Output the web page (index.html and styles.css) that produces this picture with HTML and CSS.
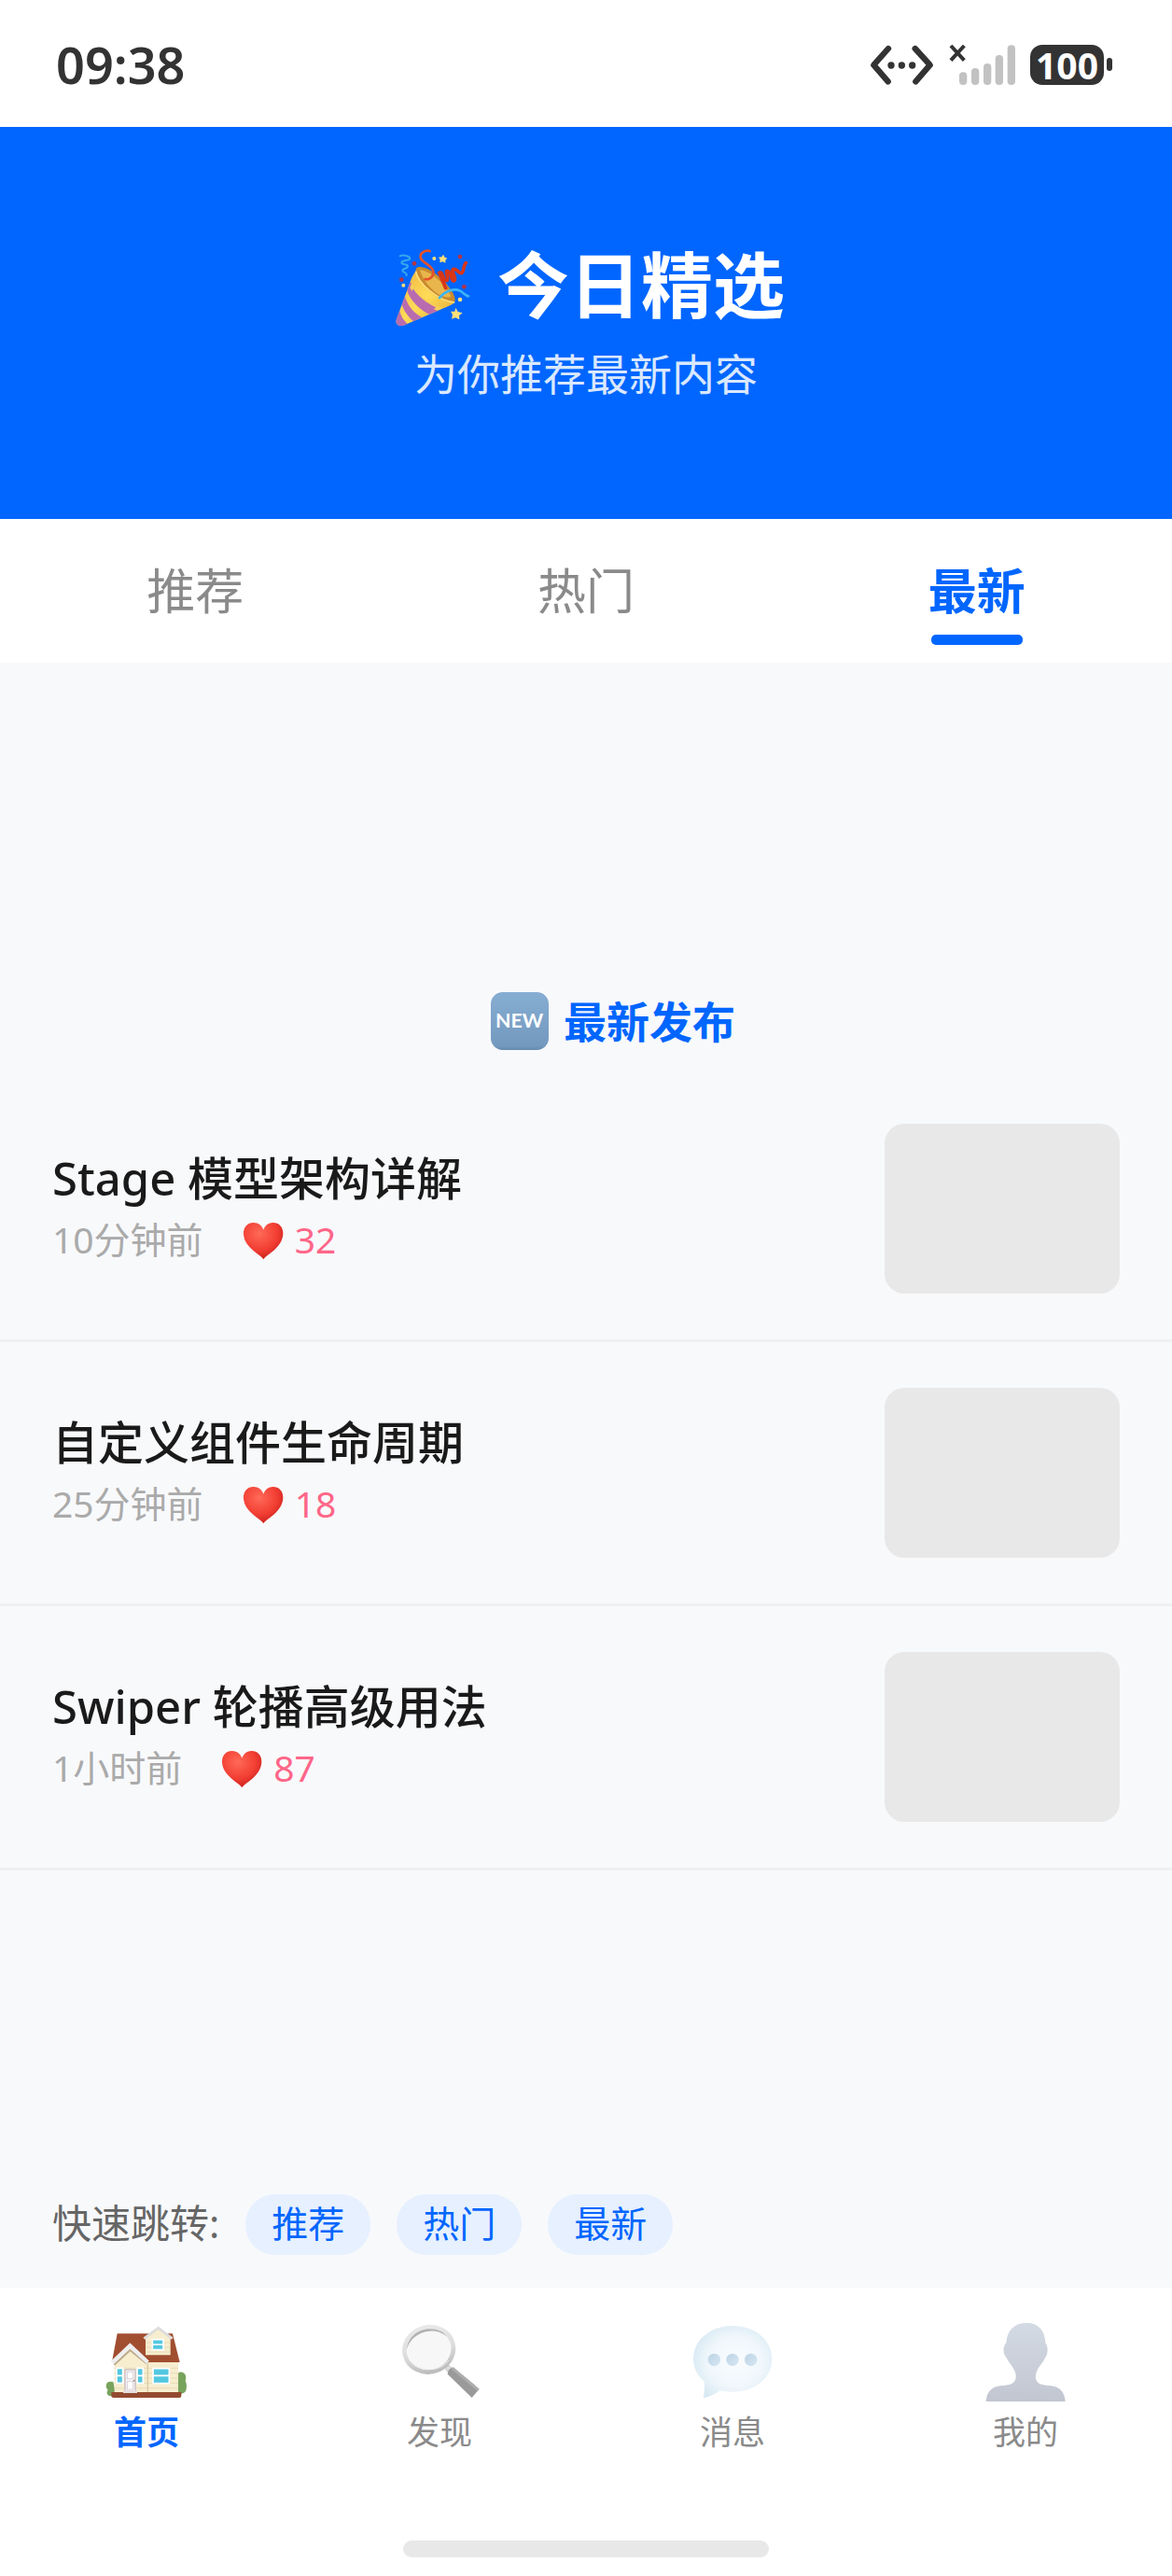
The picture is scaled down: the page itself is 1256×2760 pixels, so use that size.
FILE: index.html
```html
<!DOCTYPE html>
<html lang="zh-CN">
<head>
    <meta charset="UTF-8">
    <meta name="viewport" content="width=device-width, initial-scale=1.0">
    <title>今日精选</title>
    <link rel="stylesheet" href="styles.css">
</head>
<body>

    <div class="status-bar">
        <span class="time">09:38</span>
        <div class="status-icons">
            <svg width="70" height="45" viewBox="96 84 210 135" fill="none" stroke="#333" stroke-width="19" stroke-linecap="round" stroke-linejoin="round">
                <path d="M156 99L109 152L155 205M242 99L290 152L244 205"/>
                <g fill="#333" stroke="none">
                    <circle cx="165" cy="153" r="11"/>
                    <circle cx="199" cy="153" r="11"/>
                    <circle cx="233" cy="153" r="11"/>
                </g>
            </svg>
            <svg width="72" height="45" viewBox="348 84 216 135">
                <path d="M354 90L397 137M397 90L354 137" stroke="#333" stroke-width="12"/>
                <g fill="#c2c2c2">
                    <rect x="381" y="175" width="25" height="41" rx="12"/>
                    <rect x="420" y="162" width="25" height="54" rx="12"/>
                    <rect x="459" y="147" width="25" height="69" rx="12"/>
                    <rect x="497" y="120" width="25" height="96" rx="12"/>
                    <rect x="536" y="88" width="25" height="128" rx="12"/>
                </g>
            </svg>
            <div class="battery"><span>100</span></div>
        </div>
    </div>

    <header class="banner">
        <h1>
            <svg width="96" height="96" viewBox="45 54 288 288">
                <defs>
                    <linearGradient id="cone" x1="0" y1="0" x2="1" y2="1">
                        <stop offset="0" stop-color="#e9a93c"/>
                        <stop offset=".5" stop-color="#ffdc58"/>
                        <stop offset="1" stop-color="#d99a2e"/>
                    </linearGradient>
                    <clipPath id="cone-shape">
                        <path d="M137 150C139 190 205 250 262 252C252 262 215 275 195 284L97 326C83 332 70 322 74 308L124 172Z"/>
                    </clipPath>
                </defs>
                <path d="M137 152C132 128 175 134 215 172C252 206 270 240 261 251C250 265 205 245 170 212C148 190 137 168 137 152Z" fill="#c98a2d"/>
                <path d="M150 148C180 148 235 195 250 233C220 246 165 200 150 148Z" fill="#e8b64c"/>
                <g clip-path="url(#cone-shape)">
                    <path d="M60 140H270V340H60Z" fill="url(#cone)"/>
                    <path d="M118 180C130 220 170 262 220 282L192 296C150 278 118 245 108 212ZM100 226C108 260 130 288 160 302L136 318C112 300 96 276 90 252ZM84 276C88 295 98 312 116 326L90 336L66 310Z" fill="#b96bb0"/>
                    <path d="M124 190C140 226 178 256 224 270L206 278C160 262 130 232 118 204Z" fill="#f7cf55"/>
                    <path d="M128 208C146 234 170 254 202 268L186 280C158 268 134 246 120 224Z" fill="#b96bb0"/>
                </g>
                <path d="M137 152C142 190 210 249 262 252" fill="none" stroke="#ffe07a" stroke-width="5"/>
                <g fill="none" stroke-linecap="round">
                    <path d="M182 87C165 83 148 94 153 110C159 126 190 133 193 153C195 169 181 181 167 177" stroke="#e5512a" stroke-width="8"/>
                    <path d="M233 206L212 157C223 147 224 184 236 182C247 178 227 148 239 151C252 153 250 188 261 182C270 174 246 149 259 145C272 143 274 163 285 157C294 151 286 137 298 125" stroke="#d93618" stroke-width="11"/>
                    <path d="M213 237C234 214 260 206 279 215C290 220 295 230 306 232" stroke="#3fb4f5" stroke-width="8"/>
                    <path d="M86 103C100 97 119 105 118 112C116 119 91 115 91 124C91 133 112 126 111 136C110 145 94 142 94 150C95 158 109 153 107 165" stroke="#36a7ee" stroke-width="6"/>
                </g>
                <g fill="#b83242">
                    <circle cx="132" cy="127" r="7"/>
                    <circle cx="91" cy="179" r="7"/>
                    <circle cx="279" cy="105" r="7"/>
                    <circle cx="292" cy="202" r="7"/>
                </g>
                <g fill="#ffdf7a">
                    <circle cx="97" cy="197" r="6"/>
                    <circle cx="196" cy="111" r="6"/>
                    <circle cx="279" cy="243" r="7"/>
                    <path d="M225 98L230 107L238 110L232 116L232 125L223 121L214 124L215 114L210 107L220 106Z"/>
                    <path d="M265 269L272 282L287 286L276 294L277 307L264 301L252 305L255 291L249 281L262 281Z"/>
                </g>
            </svg>
            今日精选
        </h1>
        <p>为你推荐最新内容</p>
    </header>

    <nav class="tabs">
        <button type="button">推荐</button>
        <button type="button">热门</button>
        <button type="button" class="active">最新</button>
    </nav>

    <main class="content">
        <h2>
            <svg width="62" height="62" viewBox="84 99 186 186">
                <defs>
                    <linearGradient id="new-bg" x1="0" y1="0" x2="0" y2="1">
                        <stop offset="0" stop-color="#86add2"/>
                        <stop offset=".93" stop-color="#7499bf"/>
                        <stop offset="1" stop-color="#6488ae"/>
                    </linearGradient>
                </defs>
                <rect x="84" y="99" width="186" height="186" rx="38" fill="url(#new-bg)"/>
                <text class="new-text" x="176" y="213" text-anchor="middle">NEW</text>
            </svg>
            最新发布
        </h2>

        <svg class="defs" width="0" height="0">
            <defs>
                <radialGradient id="heart-bg" cx=".4" cy=".3" r=".75">
                    <stop offset="0" stop-color="#ff6a58"/>
                    <stop offset=".6" stop-color="#f23e33"/>
                    <stop offset="1" stop-color="#c51d1a"/>
                </radialGradient>
                <symbol id="heart" viewBox="690 354 132 132">
                    <path d="M757 484C750 474 734 465 719 451C702 435 693 419 693 400C693 380 706 366 725 366C741 366 752 375 757 389C762 375 773 366 788 366C807 366 820 380 820 400C820 419 811 435 795 451C780 465 764 474 757 484Z" fill="url(#heart-bg)"/>
                </symbol>
            </defs>
        </svg>

        <ul class="news-list">
            <li class="news-item">
                <div class="news-text">
                    <h3>Stage 模型架构详解</h3>
                    <p><span>10分钟前</span><span class="like"><svg width="44" height="44"><use href="#heart"/></svg>32</span></p>
                </div>
                <div class="thumb"></div>
            </li>
            <li class="news-item">
                <div class="news-text">
                    <h3>自定义组件生命周期</h3>
                    <p><span>25分钟前</span><span class="like"><svg width="44" height="44"><use href="#heart"/></svg>18</span></p>
                </div>
                <div class="thumb"></div>
            </li>
            <li class="news-item">
                <div class="news-text">
                    <h3>Swiper 轮播高级用法</h3>
                    <p><span>1小时前</span><span class="like"><svg width="44" height="44"><use href="#heart"/></svg>87</span></p>
                </div>
                <div class="thumb"></div>
            </li>
        </ul>
    </main>

    <div class="quick-jump">
        <span>快速跳转:</span>
        <button type="button">推荐</button>
        <button type="button">热门</button>
        <button type="button">最新</button>
    </div>

    <footer class="bottom-bar">
        <nav class="bottom-nav">
            <a href="#" class="active">
                <svg width="90" height="90" viewBox="66 75 270 270">
                    <path d="M72 285C72 276 82 273 94 276L104 322H84C71 318 73 306 77 302C71 296 70 290 72 285ZM298 262C298 245 312 240 322 248C330 255 328 266 326 272C332 284 330 300 327 306C320 315 308 316 298 314Z" fill="#78a35c"/>
                    <path d="M88 309H313V321Q313 327 306 327H95Q88 327 88 321Z" fill="#934b30"/>
                    <path d="M98 200L148 165L200 212H303V309H98Z" fill="#f7edcf"/>
                    <path d="M98 232H303M98 248H303M98 264H303M98 280H303M98 296H303" stroke="#e3d5ae" stroke-width="2"/>
                    <path d="M205 212V309" stroke="#d9cba6" stroke-width="4"/>
                    <path d="M107 121H285L308 213H205L148 158L91 206Z" fill="#a14e30"/>
                    <path d="M198 136L239 106L278 136V190H198Z" fill="#f7edcf"/>
                    <path d="M198 150H278M198 165H278M198 180H278" stroke="#e3d5ae" stroke-width="2"/>
                    <path d="M193 137L239 103L284 137" fill="none" stroke="#dedddd" stroke-width="9"/>
                    <path d="M97 221L148 174L201 217" fill="none" stroke="#bda98c" stroke-width="6"/>
                    <path d="M91 214L148 160L205 213" fill="none" stroke="#eee" stroke-width="13"/>
                    <g fill="#52c7e0" stroke="#fff" stroke-width="5">
                        <path d="M220 140H255V173H220ZM220 156H255M105 232H125V280H105ZM105 256H125M171 232H190V280H171ZM171 256H190M222 233H274V281H222ZM222 256H274"/>
                    </g>
                    <rect x="132" y="237" width="33" height="71" fill="#f3eff2" stroke="#c9bdc3" stroke-width="4"/>
                    <rect x="139" y="244" width="19" height="22" fill="#fff" stroke="#d0c7cc" stroke-width="2"/>
                    <rect x="139" y="275" width="19" height="25" fill="#fff" stroke="#d0c7cc" stroke-width="2"/>
                    <circle cx="161" cy="272" r="3" fill="#9a8a72"/>
                    <path d="M126 304H171V312H126Z" fill="#e5dddd"/>
                </svg>
                首页
            </a>
            <a href="#">
                <svg width="90" height="90" viewBox="78 75 270 270">
                    <defs>
                        <linearGradient id="ring" x1="0" y1="0" x2="0" y2="1">
                            <stop offset="0" stop-color="#e8e8e8"/>
                            <stop offset=".5" stop-color="#dedede"/>
                            <stop offset="1" stop-color="#bdbdbd"/>
                        </linearGradient>
                    </defs>
                    <path d="M232 229L243 223L258 236L247 248L235 240Z" fill="#ddd" stroke="#bbb" stroke-width="2"/>
                    <path d="M239 251Q240 234 257 229L341 299L317 327Z" fill="#9a9a9a"/>
                    <path d="M257 229L341 299L335 305L251 235Z" fill="#adadad"/>
                    <ellipse cx="179" cy="172" rx="79" ry="72" transform="rotate(-15 179 172)" fill="#f7f7f7" stroke="url(#ring)" stroke-width="14"/>
                    <path d="M108 170C112 132 144 106 182 106C207 106 226 115 237 131C219 116 202 112 181 113C147 115 118 137 108 170Z" fill="#b2b2b2"/>
                    <path d="M118 207C140 242 213 249 242 207" fill="none" stroke="#eee" stroke-width="3"/>
                </svg>
                发现
            </a>
            <a href="#">
                <svg width="90" height="90" viewBox="60 75 270 270">
                    <defs>
                        <radialGradient id="bubble" cx=".54" cy=".5" r=".58">
                            <stop offset="0" stop-color="#fafcfe"/>
                            <stop offset=".6" stop-color="#f0f7fc"/>
                            <stop offset="1" stop-color="#d8e9f3"/>
                        </radialGradient>
                        <linearGradient id="dot" x1="0" y1="0" x2="1" y2="1">
                            <stop offset="0" stop-color="#bdd4e5"/>
                            <stop offset="1" stop-color="#d5e6f3"/>
                        </linearGradient>
                    </defs>
                    <path d="M195 96C267 96 322 141 322 202C322 263 267 308 195 308C180 308 167 306 155 304C139 316 118 324 101 329C105 312 106 292 104 274C82 256 69 231 69 202C69 141 123 96 195 96Z" fill="url(#bubble)"/>
                    <g fill="url(#dot)">
                        <circle cx="136" cy="205" r="20"/>
                        <circle cx="195" cy="205" r="20"/>
                        <circle cx="254" cy="205" r="20"/>
                    </g>
                </svg>
                消息
            </a>
            <a href="#">
                <svg width="90" height="90" viewBox="72 75 270 270">
                    <defs>
                        <linearGradient id="person" x1="0" y1="0" x2="0" y2="1">
                            <stop offset="0" stop-color="#d3dae3"/>
                            <stop offset="1" stop-color="#c2c6d1"/>
                        </linearGradient>
                    </defs>
                    <path d="M210 86C249 86 270 112 271 151C280 161 280 183 272 196C264 214 246 230 241 249C237 266 242 279 258 284C278 289 303 286 318 300C330 311 334 324 335 339H80C81 324 85 311 97 300C112 286 137 289 158 284C173 279 179 266 175 249C170 230 153 214 144 196C134 183 134 161 145 151C147 112 170 86 210 86Z" fill="url(#person)"/>
                </svg>
                我的
            </a>
        </nav>
        <div class="home-indicator"></div>
    </footer>

</body>
</html>
```

FILE: styles.css
```css
* {
    box-sizing: border-box;
    margin: 0;
    padding: 0;
}
body {
    font-family: "Noto Sans", "Noto Sans CJK SC", sans-serif;
    display: flex;
    flex-direction: column;
    min-height: 100vh;
    background: #f8f9fb;
}
button {
    font-family: inherit;
    border: none;
    cursor: pointer;
}
svg {
    flex-shrink: 0;
}

.status-bar {
    display: flex;
    align-items: center;
    justify-content: space-between;
    height: 136px;
    padding: 2px 64px 0 60px;
    background: #fff;
}
.time {
    font-size: 54px;
    font-weight: 600;
    color: #333;
}
.status-icons {
    display: flex;
    align-items: center;
    gap: 15px;
}
.battery {
    display: flex;
    align-items: center;
    gap: 3px;
}
.battery span {
    width: 79px;
    border-radius: 13px;
    background: #333;
    color: #fff;
    font-size: 39px;
    font-weight: 700;
    line-height: 43px;
    text-align: center;
}
.battery::after {
    content: "";
    width: 6px;
    height: 14px;
    border-radius: 3px;
    background: #333;
}

.banner {
    display: flex;
    flex-direction: column;
    align-items: center;
    justify-content: center;
    height: 420px;
    background: #0066ff;
    color: #fff;
}
.banner h1 {
    display: flex;
    align-items: center;
    gap: 22px;
    font-size: 77px;
    font-weight: 700;
    line-height: 108px;
}
.banner p {
    font-size: 46px;
    line-height: 80px;
    color: #d9e8ff;
}

.tabs {
    display: flex;
    height: 154px;
    background: #fff;
}
.tabs button {
    flex: 1;
    display: flex;
    flex-direction: column;
    align-items: center;
    padding-top: 40px;
    background: none;
    font-size: 52px;
    line-height: 74px;
    color: #8a8a8a;
}
.tabs .active {
    font-weight: 700;
    color: #0066ff;
}
.tabs .active::after {
    content: "";
    width: 98px;
    height: 11px;
    margin-top: 10px;
    border-radius: 5px;
    background: #0066ff;
}

.content {
    flex: 1;
    display: flex;
    flex-direction: column;
    justify-content: center;
}
.content h2 {
    display: flex;
    align-items: center;
    justify-content: center;
    gap: 16px;
    padding: 40px 0 30px 58px;
    font-size: 46px;
    font-weight: 700;
    line-height: 62px;
    color: #0066ff;
}
.new-text {
    font-family: Lato, sans-serif;
    font-size: 64px;
    font-weight: 700;
    fill: #fff;
}
.defs {
    display: block;
}

.news-list {
    list-style: none;
}
.news-item {
    display: flex;
    align-items: center;
    justify-content: space-between;
    padding: 49px 56px;
    border-bottom: 3px solid #eff0f2;
}
.news-item h3 {
    font-size: 49px;
    font-weight: 500;
    line-height: 66px;
    color: #1a1a1a;
}
.news-item p {
    display: flex;
    gap: 42px;
    font-size: 39px;
    line-height: 66px;
    color: #aaa;
}
.like {
    display: flex;
    align-items: center;
    gap: 12px;
    color: #ff6688;
}
.thumb {
    width: 252px;
    height: 182px;
    border-radius: 21px;
    background: #e8e8e8;
}

.quick-jump {
    display: flex;
    align-items: center;
    gap: 28px;
    padding: 35px 56px;
    font-size: 42px;
    line-height: 61px;
    color: #666;
}
.quick-jump span {
    padding-bottom: 4px;
}
.quick-jump button {
    padding: 0 28px 4px;
    border-radius: 32px;
    background: #e6f0ff;
    font-size: 39px;
    line-height: 61px;
    color: #0066ff;
}

.bottom-bar {
    padding: 34px 0 20px;
    background: #fff;
}
.bottom-nav {
    display: flex;
}
.bottom-nav a {
    flex: 1;
    display: flex;
    flex-direction: column;
    align-items: center;
    gap: 6px;
    font-size: 35px;
    line-height: 50px;
    color: #8a8a8a;
    text-decoration: none;
}
.bottom-nav .active {
    font-weight: 700;
    color: #0066ff;
}
.home-indicator {
    width: 392px;
    height: 18px;
    margin: 91px auto 0;
    border-radius: 9px;
    background: #e8e8e8;
}
```
